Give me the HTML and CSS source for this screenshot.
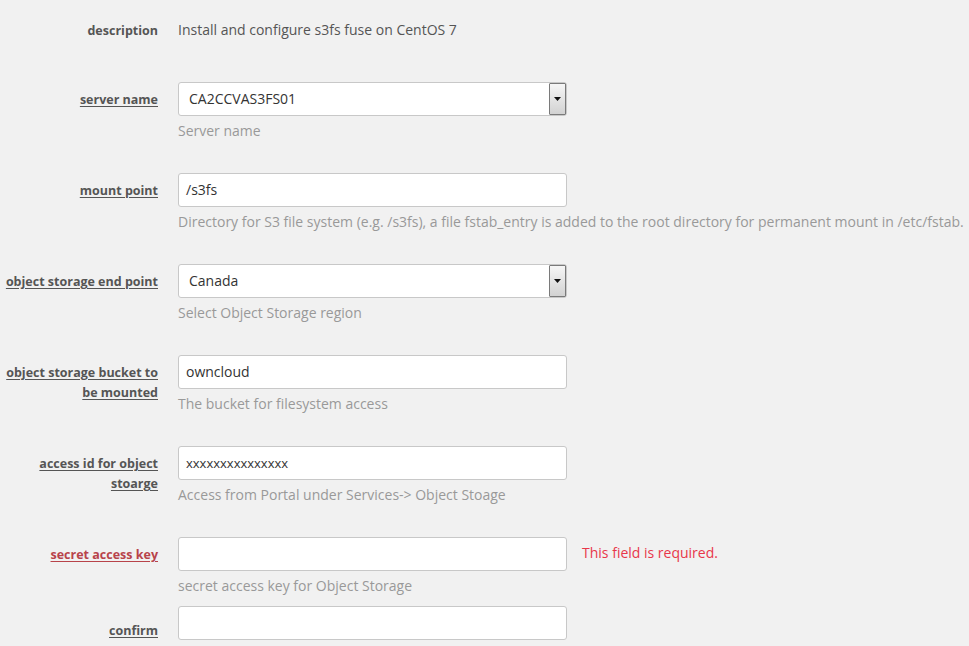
FILE: index.html
```html
<!DOCTYPE html>
<html>
<head>
<meta charset="utf-8">
<link rel="stylesheet" href="styles.css">
</head>
<body>
<form class="form">
  <div class="row row-desc">
    <div class="label plain">description</div>
    <div class="control"><div class="static">Install and configure s3fs fuse on CentOS 7</div></div>
  </div>

  <div class="row">
    <div class="label"><span class="lbl">server name</span></div>
    <div class="control">
      <div class="select"><span class="val">CA2CCVAS3FS01</span><span class="arrow"><svg width="7" height="4" viewBox="0 0 7 4"><path d="M0 0h7L3.5 4z" fill="#111"/></svg></span></div>
      <div class="help">Server name</div>
    </div>
  </div>

  <div class="row">
    <div class="label"><span class="lbl">mount point</span></div>
    <div class="control">
      <div class="input">/s3fs</div>
      <div class="help">Directory for S3 file system (e.g. /s3fs), a file fstab_entry is added to the root directory for permanent mount in /etc/fstab.</div>
    </div>
  </div>

  <div class="row">
    <div class="label"><span class="lbl">object storage end point</span></div>
    <div class="control">
      <div class="select"><span class="val">Canada</span><span class="arrow"><svg width="7" height="4" viewBox="0 0 7 4"><path d="M0 0h7L3.5 4z" fill="#111"/></svg></span></div>
      <div class="help">Select Object Storage region</div>
    </div>
  </div>

  <div class="row">
    <div class="label"><span class="lbl">object storage bucket to be mounted</span></div>
    <div class="control">
      <div class="input">owncloud</div>
      <div class="help">The bucket for filesystem access</div>
    </div>
  </div>

  <div class="row">
    <div class="label"><span class="lbl">access id for object stoarge</span></div>
    <div class="control">
      <div class="input small">xxxxxxxxxxxxxxx</div>
      <div class="help">Access from Portal under Services-&gt; Object Stoage</div>
    </div>
  </div>

  <div class="row row-tight">
    <div class="label"><span class="lbl err">secret access key</span></div>
    <div class="control">
      <div class="line"><div class="input"></div><span class="error">This field is required.</span></div>
      <div class="help">secret access key for Object Storage</div>
    </div>
  </div>

  <div class="row">
    <div class="label label-low"><span class="lbl">confirm</span></div>
    <div class="control">
      <div class="input"></div>
    </div>
  </div>
</form>
</body>
</html>
```

FILE: styles.css
```css
html, body {
  margin: 0;
  padding: 0;
  background: #f1f1f1;
  font-family: "Open Sans", "Liberation Sans", sans-serif;
  font-size: 14px;
  color: #555;
  overflow: hidden;
}
.form {
  padding-top: 13px;
}
.row {
  display: flex;
  gap: 20px;
  margin-bottom: 32px;
}
.row-desc {
  height: 36px;
  margin-bottom: 33px;
}
.row-tight {
  margin-bottom: 10px;
}
.label {
  width: 158px;
  flex: none;
  text-align: right;
  padding-top: 8px;
  line-height: 20px;
  font-size: 12.5px;
  font-weight: 700;
  color: #555;
}
.label-low {
  padding-top: 15px;
}
.lbl {
  text-decoration: underline;
  text-underline-offset: 2px;
}
.lbl.err {
  color: #b8434a;
}
.control {
  flex: none;
  width: 389px;
  white-space: nowrap;
}
.static {
  padding-top: 7px;
  line-height: 20px;
  color: #555;
}
.input, .select {
  box-sizing: border-box;
  width: 389px;
  height: 34px;
  background: #fff;
  border: 1px solid #c8c8c8;
  border-radius: 3px;
  line-height: 32px;
  padding-left: 7px;
  color: #333;
  font-size: 14px;
}
.input.small {
  font-size: 13px;
}
.select {
  position: relative;
  padding-left: 10px;
}
.arrow {
  position: absolute;
  right: 0;
  top: 0;
  width: 17px;
  height: 32px;
  box-sizing: border-box;
  border: 1px solid #7a7a7a;
  border-radius: 1px;
  background: linear-gradient(#f6f6f6, #d2d2d2);
  display: flex;
  align-items: center;
  justify-content: center;
}
.arrow svg {
  display: block;
}
.help {
  margin-top: 5px;
  line-height: 20px;
  color: #999;
}
.line {
  display: flex;
  align-items: center;
  gap: 15px;
}
.line .input {
  flex: none;
}
.error {
  color: #e8374a;
  font-size: 14px;
  margin-top: -3px;
}
```
